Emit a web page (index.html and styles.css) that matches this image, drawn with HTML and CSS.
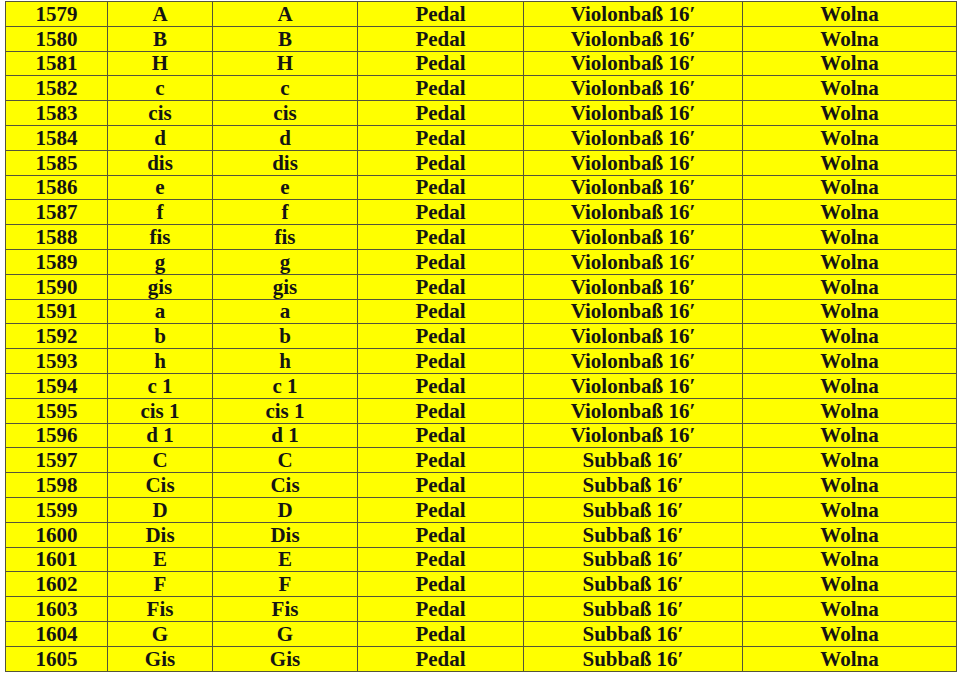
FILE: index.html
```html
<!DOCTYPE html>
<html>
<head>
<meta charset="utf-8">
<link rel="stylesheet" href="styles.css">
</head>
<body>
<table class="keys">
<colgroup>
<col class="c1"><col class="c2"><col class="c3"><col class="c4"><col class="c5"><col class="c6">
</colgroup>
<tbody>
<tr><td>1579</td><td>A</td><td>A</td><td>Pedal</td><td>Violonbaß 16′</td><td>Wolna</td></tr>
<tr><td>1580</td><td>B</td><td>B</td><td>Pedal</td><td>Violonbaß 16′</td><td>Wolna</td></tr>
<tr><td>1581</td><td>H</td><td>H</td><td>Pedal</td><td>Violonbaß 16′</td><td>Wolna</td></tr>
<tr><td>1582</td><td>c</td><td>c</td><td>Pedal</td><td>Violonbaß 16′</td><td>Wolna</td></tr>
<tr><td>1583</td><td>cis</td><td>cis</td><td>Pedal</td><td>Violonbaß 16′</td><td>Wolna</td></tr>
<tr><td>1584</td><td>d</td><td>d</td><td>Pedal</td><td>Violonbaß 16′</td><td>Wolna</td></tr>
<tr><td>1585</td><td>dis</td><td>dis</td><td>Pedal</td><td>Violonbaß 16′</td><td>Wolna</td></tr>
<tr><td>1586</td><td>e</td><td>e</td><td>Pedal</td><td>Violonbaß 16′</td><td>Wolna</td></tr>
<tr><td>1587</td><td>f</td><td>f</td><td>Pedal</td><td>Violonbaß 16′</td><td>Wolna</td></tr>
<tr><td>1588</td><td>fis</td><td>fis</td><td>Pedal</td><td>Violonbaß 16′</td><td>Wolna</td></tr>
<tr><td>1589</td><td>g</td><td>g</td><td>Pedal</td><td>Violonbaß 16′</td><td>Wolna</td></tr>
<tr><td>1590</td><td>gis</td><td>gis</td><td>Pedal</td><td>Violonbaß 16′</td><td>Wolna</td></tr>
<tr><td>1591</td><td>a</td><td>a</td><td>Pedal</td><td>Violonbaß 16′</td><td>Wolna</td></tr>
<tr><td>1592</td><td>b</td><td>b</td><td>Pedal</td><td>Violonbaß 16′</td><td>Wolna</td></tr>
<tr><td>1593</td><td>h</td><td>h</td><td>Pedal</td><td>Violonbaß 16′</td><td>Wolna</td></tr>
<tr><td>1594</td><td>c 1</td><td>c 1</td><td>Pedal</td><td>Violonbaß 16′</td><td>Wolna</td></tr>
<tr><td>1595</td><td>cis 1</td><td>cis 1</td><td>Pedal</td><td>Violonbaß 16′</td><td>Wolna</td></tr>
<tr><td>1596</td><td>d 1</td><td>d 1</td><td>Pedal</td><td>Violonbaß 16′</td><td>Wolna</td></tr>
<tr><td>1597</td><td>C</td><td>C</td><td>Pedal</td><td>Subbaß 16′</td><td>Wolna</td></tr>
<tr><td>1598</td><td>Cis</td><td>Cis</td><td>Pedal</td><td>Subbaß 16′</td><td>Wolna</td></tr>
<tr><td>1599</td><td>D</td><td>D</td><td>Pedal</td><td>Subbaß 16′</td><td>Wolna</td></tr>
<tr><td>1600</td><td>Dis</td><td>Dis</td><td>Pedal</td><td>Subbaß 16′</td><td>Wolna</td></tr>
<tr><td>1601</td><td>E</td><td>E</td><td>Pedal</td><td>Subbaß 16′</td><td>Wolna</td></tr>
<tr><td>1602</td><td>F</td><td>F</td><td>Pedal</td><td>Subbaß 16′</td><td>Wolna</td></tr>
<tr><td>1603</td><td>Fis</td><td>Fis</td><td>Pedal</td><td>Subbaß 16′</td><td>Wolna</td></tr>
<tr><td>1604</td><td>G</td><td>G</td><td>Pedal</td><td>Subbaß 16′</td><td>Wolna</td></tr>
<tr><td>1605</td><td>Gis</td><td>Gis</td><td>Pedal</td><td>Subbaß 16′</td><td>Wolna</td></tr>
</tbody>
</table>
</body>
</html>
```
FILE: styles.css
```css
html, body {
  margin: 0;
  padding: 0;
  background: #ffffff;
}
body {
  padding: 1px 0 0 5px;
}
.keys {
  border-collapse: collapse;
  table-layout: fixed;
  width: 951px;
  background: #ffff00;
  font-family: "Liberation Serif", "Times New Roman", serif;
  font-weight: bold;
  font-size: 21px;
  color: #141414;
}
.c1 { width: 102px; }
.c2 { width: 105px; }
.c3 { width: 145px; }
.c4 { width: 166px; }
.c5 { width: 219px; }
.c6 { width: 214px; }
.keys td {
  border: 1px solid #55553a;
  height: 23.8px;
  padding: 0;
  text-align: center;
  vertical-align: middle;
  line-height: 20px;
  white-space: nowrap;
}
```
